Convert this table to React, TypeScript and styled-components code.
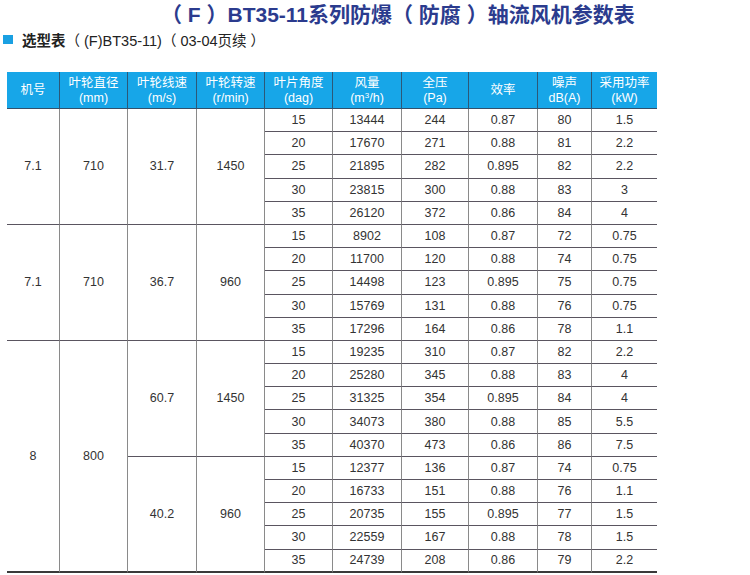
import React from "react";
import styled, { createGlobalStyle } from "styled-components";

const Global = createGlobalStyle`
  html, body { margin: 0; padding: 0; background: #ffffff; }
  body { font-family: "Liberation Sans", "Noto Sans CJK SC", sans-serif; }
`;

const Page = styled.div`
  width: 750px;
  height: 575px;
  overflow: hidden;
  display: flex;
  flex-direction: column;
`;

const Title = styled.h1`
  margin: 0;
  padding: 2px 0 0 161px;
  height: 28px;
  font-family: "Liberation Sans", "Noto Sans CJK SC", sans-serif;
  font-size: 21px;
  line-height: 26px;
  font-weight: 700;
  color: #2b3b8e;
  white-space: nowrap;
`;

const Subtitle = styled.div`
  display: flex;
  align-items: center;
  gap: 9px;
  height: 22px;
  padding-left: 3px;
  margin-top: -2px;
  font-size: 14.5px;
  color: #222;
  white-space: nowrap;
`;

const Square = styled.span`
  width: 10px;
  height: 9px;
  background: #1aa0e2;
`;

const Strong = styled.b`
  font-weight: 700;
`;

const Grid = styled.div`
  margin: 22px 0 0 7px;
  width: 650px;
  display: grid;
  grid-template-columns: 53px 68px 69px 68px 68px 69px 67px 69px 54px 65px;
  grid-template-rows: 37px repeat(20, 23.2px);
  font-size: 12.5px;
  color: #333;
`;

const HeadCell = styled.div<{ $last?: boolean }>`
  box-sizing: border-box;
  background: #17a6e8;
  color: #ffffff;
  display: flex;
  align-items: center;
  justify-content: center;
  text-align: center;
  font-size: 12.5px;
  line-height: 15px;
  border-right: ${(p) => (p.$last ? "none" : "1px solid #2c5878")};
  border-bottom: 1px solid #34506a;
  padding-top: 1px;
`;

const Cell = styled.div<{ $span?: number; $last?: boolean; $bottom?: boolean }>`
  box-sizing: border-box;
  grid-row: span ${(p) => p.$span ?? 1};
  display: flex;
  align-items: center;
  justify-content: center;
  border-right: ${(p) => (p.$last ? "none" : "1px solid #8a8a8a")};
  border-bottom: ${(p) => (p.$bottom ? "2px solid #3a3a3a" : "1px solid #5a5560")};
`;

const Sup = styled.sup`
  font-size: 8px;
  vertical-align: 4px;
  line-height: 0;
`;

type Row = [string, string, string, string, string, string];

interface Sub {
  speed: string;
  rpm: string;
  rows: Row[];
}

interface Group {
  no: string;
  dia: string;
  subs: Sub[];
}

const groups: Group[] = [
  {
    no: "7.1",
    dia: "710",
    subs: [
      {
        speed: "31.7",
        rpm: "1450",
        rows: [
          ["15", "13444", "244", "0.87", "80", "1.5"],
          ["20", "17670", "271", "0.88", "81", "2.2"],
          ["25", "21895", "282", "0.895", "82", "2.2"],
          ["30", "23815", "300", "0.88", "83", "3"],
          ["35", "26120", "372", "0.86", "84", "4"],
        ],
      },
    ],
  },
  {
    no: "7.1",
    dia: "710",
    subs: [
      {
        speed: "36.7",
        rpm: "960",
        rows: [
          ["15", "8902", "108", "0.87", "72", "0.75"],
          ["20", "11700", "120", "0.88", "74", "0.75"],
          ["25", "14498", "123", "0.895", "75", "0.75"],
          ["30", "15769", "131", "0.88", "76", "0.75"],
          ["35", "17296", "164", "0.86", "78", "1.1"],
        ],
      },
    ],
  },
  {
    no: "8",
    dia: "800",
    subs: [
      {
        speed: "60.7",
        rpm: "1450",
        rows: [
          ["15", "19235", "310", "0.87", "82", "2.2"],
          ["20", "25280", "345", "0.88", "83", "4"],
          ["25", "31325", "354", "0.895", "84", "4"],
          ["30", "34073", "380", "0.88", "85", "5.5"],
          ["35", "40370", "473", "0.86", "86", "7.5"],
        ],
      },
      {
        speed: "40.2",
        rpm: "960",
        rows: [
          ["15", "12377", "136", "0.87", "74", "0.75"],
          ["20", "16733", "151", "0.88", "76", "1.1"],
          ["25", "20735", "155", "0.895", "77", "1.5"],
          ["30", "22559", "167", "0.88", "78", "1.5"],
          ["35", "24739", "208", "0.86", "79", "2.2"],
        ],
      },
    ],
  },
];

const headers: React.ReactNode[] = [
  "机号",
  <>叶轮直径<br />(mm)</>,
  <>叶轮线速<br />(m/s)</>,
  <>叶轮转速<br />(r/min)</>,
  <>叶片角度<br />(dag)</>,
  <>风量<br />(m<Sup>3</Sup>/h)</>,
  <>全压<br />(Pa)</>,
  "效率",
  <>噪声<br />dB(A)</>,
  <>采用功率<br />(kW)</>,
];

export default function App() {
  const cells: React.ReactNode[] = [];
  groups.forEach((g, gi) => {
    const lastGroup = gi === groups.length - 1;
    const total = g.subs.reduce((n, s) => n + s.rows.length, 0);
    g.subs.forEach((s, si) => {
      const lastSub = lastGroup && si === g.subs.length - 1;
      s.rows.forEach((r, ri) => {
        const k = `${gi}-${si}-${ri}`;
        if (si === 0 && ri === 0) {
          cells.push(
            <Cell key={k + "no"} $span={total} $bottom={lastGroup}>{g.no}</Cell>,
            <Cell key={k + "dia"} $span={total} $bottom={lastGroup}>{g.dia}</Cell>
          );
        }
        if (ri === 0) {
          cells.push(
            <Cell key={k + "sp"} $span={s.rows.length} $bottom={lastSub}>{s.speed}</Cell>,
            <Cell key={k + "rpm"} $span={s.rows.length} $bottom={lastSub}>{s.rpm}</Cell>
          );
        }
        const lastRow = lastSub && ri === s.rows.length - 1;
        r.forEach((v, vi) => {
          cells.push(
            <Cell key={k + "v" + vi} $last={vi === r.length - 1} $bottom={lastRow}>
              {v}
            </Cell>
          );
        });
      });
    });
  });

  return (
    <Page>
      <Global />
      <Title>（ F ）BT35-11系列防爆（ 防腐 ）轴流风机参数表</Title>
      <Subtitle>
        <Square />
        <span>
          <Strong>选型表</Strong>（ (F)BT35-11)（ 03-04页续 ）
        </span>
      </Subtitle>
      <Grid>
        {headers.map((h, i) => (
          <HeadCell key={i} $last={i === headers.length - 1}>
            <span>{h}</span>
          </HeadCell>
        ))}
        {cells}
      </Grid>
    </Page>
  );
}
